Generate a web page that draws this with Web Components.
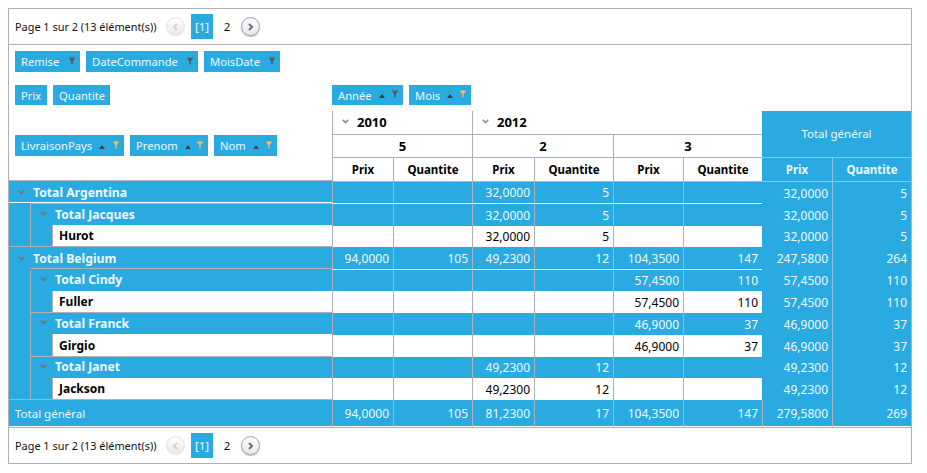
<!DOCTYPE html>
<html><head><meta charset="utf-8">
<style>
html,body{margin:0;background:#fff}
body{padding:8px 0 0 8px}
</style></head><body>
<pivot-grid></pivot-grid>
<script>
const FONT='"Noto Sans","DejaVu Sans",sans-serif';
const BLUE='#29abe2',LINE='#adb0b8',TXT='#eef9fe',SOFT='#8fc6e0';
const funnel=c=>`<svg width="6" height="8" viewBox="0 0 7 8" preserveAspectRatio="none"><path d="M.3.5h6.4v1L4.3 4v3.6H2.7V4L.3 1.5z" fill="${c}"/><path d="M1.6 1.2h3.8" stroke="#fff" stroke-opacity=".35" stroke-width=".6"/></svg>`;
const chev=c=>`<svg class="chev" width="7" height="5" viewBox="0 0 7 5"><path d="M.8.8L3.5 3.6 6.2.8" fill="none" stroke="${c}" stroke-width="1.7"/></svg>`;

class FieldChip extends HTMLElement{
 connectedCallback(){
  const sort=this.hasAttribute('sort'),f=this.getAttribute('filter');
  const s=this.attachShadow({mode:'open'});
  s.innerHTML=`<style>
  :host{display:inline-flex;align-items:center;box-sizing:border-box;height:21px;background:${BLUE};color:${TXT};padding:0 5px 0 6px;font:11.2px ${FONT};white-space:nowrap}
  .sort{flex:none;width:0;height:0;border:3px solid transparent;border-top:0;border-bottom:4px solid #3d4048;margin:2px 0 0 7px}
  .f{display:flex;margin-left:auto;margin-top:-2px}
  </style><slot></slot>${sort?'<i class="sort"></i>':''}${f?`<span class="f">${funnel(f==='on'?'#f7b84f':'#5c4d48')}</span>`:''}`;
 }
}
customElements.define('field-chip',FieldChip);

class PivotPager extends HTMLElement{
 connectedCallback(){
  const s=this.attachShadow({mode:'open'});
  s.innerHTML=`<style>
  :host{display:flex;align-items:center;height:35px;padding-left:6px;font:10.9px ${FONT};color:#111;background:#fff}
  .t{flex:0 0 151px;white-space:nowrap;padding-bottom:1px}
  .c{box-sizing:border-box;width:19px;height:19px;border-radius:50%;display:flex;align-items:center;justify-content:center;background:linear-gradient(#fff,#e8e9ee)}
  .p{border:1px solid #dfe0e5}
  .n{border:1px solid #9fa3ad;box-shadow:0 1px 1px #b5b5b5}
  .cur{margin-left:6px;width:22px;height:25px;background:${BLUE};color:${TXT};font-size:11.5px;display:flex;align-items:center;justify-content:center}
  .two{width:28px;text-align:center;font-size:11.5px}
  </style>
  <span class="t">Page 1 sur 2 (13 élément(s))</span>
  <span class="c p"><svg width="7" height="8" viewBox="0 0 7 8"><path d="M5 1L2 4l3 3" fill="none" stroke="#d0d2d8" stroke-width="2"/></svg></span>
  <span class="cur">[1]</span><span class="two">2</span>
  <span class="c n"><svg width="7" height="8" viewBox="0 0 7 8"><path d="M2 1l3 3-3 3" fill="none" stroke="#6d7078" stroke-width="2"/></svg></span>`;
 }
}
customElements.define('pivot-pager',PivotPager);

class PivotGrid extends HTMLElement{
 connectedCallback(){
  const s=this.attachShadow({mode:'open'});
  const rows=[
   [0,'Total Argentina','','','32,0000','5','','','32,0000','5'],
   [1,'Total Jacques','','','32,0000','5','','','32,0000','5'],
   [2,'Hurot','','','32,0000','5','','','32,0000','5'],
   [0,'Total Belgium','94,0000','105','49,2300','12','104,3500','147','247,5800','264'],
   [1,'Total Cindy','','','','','57,4500','110','57,4500','110'],
   [2,'Fuller','','','','','57,4500','110','57,4500','110'],
   [1,'Total Franck','','','','','46,9000','37','46,9000','37'],
   [2,'Girgio','','','','','46,9000','37','46,9000','37'],
   [1,'Total Janet','','','49,2300','12','','','49,2300','12'],
   [2,'Jackson','','','49,2300','12','','','49,2300','12'],
  ];
  let body='';
  rows.forEach((r,i)=>{
   const line=i+6,lv=r[0];
   const extra=i===0?' first':i===3?' second':(i===2||i===7)?' up':'';
   if(lv===2) body+=`<div class="g2${extra}" style="grid-row:${line};grid-column:2"></div>`;
   body+=`<div class="rh l${lv}${extra}" style="grid-row:${line};grid-column:${lv+1}/4">${lv<2?chev('#7f6f72'):''}<span>${r[1]}</span></div>`;
   for(let c=0;c<8;c++){
    const tc=c>=6;
    const wb=(i===0||i===3)&&!tc?' wb':'';
    body+=`<div class="d ${lv===2&&!tc?'w':'b'}${tc?' t':''}${wb}" style="grid-row:${line};grid-column:${c+4}">${r[c+2]}</div>`;
   }
  });
  const tot=['94,0000','105','81,2300','17','104,3500','147','279,5800','269'];
  const meas=['Prix','Quantite','Prix','Quantite','Prix','Quantite'];
  s.innerHTML=`<style>
  :host{display:block;box-sizing:border-box;width:904px;height:456px;border:1px solid ${LINE};background:#fff;font:12px ${FONT};color:#000}
  .bar{border-bottom:1px solid ${LINE}}
  .foot{border-top:1px solid ${LINE}}
  .grid{display:grid;grid-template-columns:21px 22px 280px 61px 79px 62px 79px 70px 79px 70px 79px;
   grid-template-rows:40px 26px 24px 23px 24px 22px 22px 21px 23px 21px 22px 22px 22px 21px 22px 27px}
  .top{grid-column:1/-1;grid-row:1;display:flex;gap:6px;padding:6px 0 0 6px}
  .meas{grid-column:1/4;grid-row:2;display:flex;gap:6px;padding-left:6px;align-items:flex-start}
  .meas field-chip{height:20px}
  .cols{grid-column:4/8;grid-row:2;display:flex;gap:6px;align-items:flex-start}
  .cols field-chip{height:20px}
  .rowf{grid-column:1/4;grid-row:3/6;display:flex;gap:6px;padding:24px 0 0 6px;align-items:flex-start;box-sizing:border-box;height:70px;border-bottom:1px solid ${LINE}}
  .ch{display:flex;align-items:center;justify-content:center;font-weight:700;font-size:11.5px;box-sizing:border-box;border-left:1px solid ${LINE};border-bottom:1px solid ${LINE};background:#fff;color:#000}
  .ch.y{justify-content:flex-start;font-size:13px;padding:0 0 2px 9px}
  .ch.y .chev{margin-right:8px}
  .ch.n{font-size:13px}
  .ch.tg{background:${BLUE};color:${TXT};font-weight:400;font-size:11.5px;border-left:0;border-bottom-color:${SOFT};padding-bottom:2px}
  .ch.tm{background:${BLUE};color:${TXT};border-left:0;border-bottom-color:${SOFT}}
  .ch.tm+.ch.tm{border-left:1px solid ${SOFT}}
  .chev{flex:none;margin-top:-1px}
  .rh{display:flex;align-items:center;box-sizing:border-box;font-weight:700;font-size:12.2px;white-space:nowrap;background-color:${BLUE};color:${TXT}}
  .rh .chev{margin-right:8px}
  .l0{padding-left:9px}
  .l1{padding:0 0 2px 9px;border-left:1px solid ${LINE}}
  .l2{background:#fff;color:#000;font-size:12px;padding-left:6px;border-left:1px solid ${LINE};border-bottom:1px solid ${LINE}}
  .first{margin-top:-1px;background-image:linear-gradient(${LINE},${LINE}),linear-gradient(#fff,#fff);background-repeat:no-repeat;background-size:100% 1px,100% 1px;background-position:21px 100%,0 calc(100% - 1px)}
  .second{background-image:linear-gradient(${LINE},${LINE});background-repeat:no-repeat;background-size:100% 1px;background-position:21px calc(100% - 1px)}
  .up{margin-top:-1px}
  .g1{background:${BLUE};border-bottom:1px solid ${LINE};box-sizing:border-box}
  .g2{background:${BLUE};border-left:1px solid ${LINE};border-bottom:1px solid ${LINE};box-sizing:border-box}
  .g2.up{margin-top:0}
  .d{box-sizing:border-box;display:flex;align-items:center;justify-content:flex-end;padding-right:4px;border-left:1px solid ${LINE};font-size:12px}
  .d.w{background:#fff;color:#000}
  .d.b{background:${BLUE};color:${TXT}}
  .d.wb{border-bottom:1px solid #fff}
  .d.t{border-left:0}
  .d.t+.d.t{border-left:1px solid ${SOFT}}
  .gt,.gd{background:${BLUE};color:${TXT};display:flex;align-items:center;box-sizing:border-box;border-bottom:1px solid #fff;font-size:11.5px}
  .gt{grid-column:1/4;padding-left:6px}
  .gd{justify-content:flex-end;padding-right:4px;border-left:1px solid ${LINE};font-size:12px}
  </style>
  <pivot-pager class="bar"></pivot-pager>
  <div class="grid">
   <div class="top"><field-chip style="width:65px" filter="off">Remise</field-chip><field-chip style="width:112px" filter="off">DateCommande</field-chip><field-chip style="width:76px" filter="off">MoisDate</field-chip></div>
   <div class="meas"><field-chip style="width:32px">Prix</field-chip><field-chip style="width:57px">Quantite</field-chip></div>
   <div class="cols"><field-chip style="width:71px" sort filter="off">Année</field-chip><field-chip style="width:62px" sort filter="on">Mois</field-chip></div>
   <div class="rowf"><field-chip style="width:109px" sort filter="on">LivraisonPays</field-chip><field-chip style="width:78px" sort filter="on">Prenom</field-chip><field-chip style="width:63px" sort filter="on">Nom</field-chip></div>
   <div class="ch y" style="grid-row:3;grid-column:4/6">${chev('#8d8f99')}2010</div>
   <div class="ch y" style="grid-row:3;grid-column:6/10">${chev('#8d8f99')}2012</div>
   <div class="ch n" style="grid-row:4;grid-column:4/6">5</div>
   <div class="ch n" style="grid-row:4;grid-column:6/8">2</div>
   <div class="ch n" style="grid-row:4;grid-column:8/10">3</div>
   ${meas.map((t,i)=>`<div class="ch" style="grid-row:5;grid-column:${i+4}">${t}</div>`).join('')}
   <div class="ch tg" style="grid-row:3/5;grid-column:10/12">Total général</div>
   <div class="ch tm" style="grid-row:5;grid-column:10">Prix</div>
   <div class="ch tm" style="grid-row:5;grid-column:11">Quantite</div>
   <div class="g1" style="grid-row:7/9;grid-column:1"></div>
   <div class="g1" style="grid-row:10/16;grid-column:1"></div>
   ${body}
   <div class="gt" style="grid-row:16">Total général</div>
   ${tot.map((t,i)=>`<div class="gd" style="grid-row:16;grid-column:${i+4}">${t}</div>`).join('')}
  </div>
  <pivot-pager class="foot"></pivot-pager>`;
 }
}
customElements.define('pivot-grid',PivotGrid);
</script></body></html>
